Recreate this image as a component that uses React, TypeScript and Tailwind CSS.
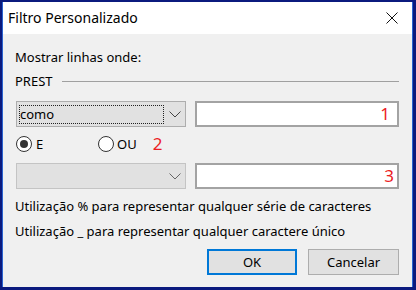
import React from 'react';

const font = { fontFamily: '"Noto Sans", "Liberation Sans", sans-serif' };

function Chevron({ color }: { color: string }) {
  return (
    <svg width="12" height="7" viewBox="0 0 12 7" className="ml-auto mr-[4px]">
      <polyline points="0.5,0.5 6,6 11.5,0.5" fill="none" stroke={color} strokeWidth="1" />
    </svg>
  );
}

function Radio({ checked }: { checked?: boolean }) {
  return (
    <span className="flex h-[16px] w-[16px] items-center justify-center rounded-full border border-[#333] bg-white">
      {checked && <span className="h-[8px] w-[8px] rounded-full bg-[#333]" />}
    </span>
  );
}

export default function App() {
  return (
    <div
      className="flex h-[290px] w-[416px] bg-[#0b1a7e] pb-[3px] pl-[2px] pr-[3px] pt-[2px] text-[13px] leading-[20px] text-black"
      style={font}
    >
      <div className="flex flex-1 flex-col border-x border-[#2a63cf]">
        {/* title bar */}
        <div className="flex h-[32px] items-center bg-white pl-[5px] pr-[14px]">
          <span className="text-[14px]">Filtro Personalizado</span>
          <svg width="12" height="12" viewBox="0 0 12 12" className="ml-auto">
            <path d="M0.5 0.5 L11.5 11.5 M11.5 0.5 L0.5 11.5" stroke="#111" strokeWidth="1" />
          </svg>
        </div>

        {/* body */}
        <div className="flex flex-1 flex-col bg-[#f0f0f0] px-3 pt-[13px]">
          <div>Mostrar linhas onde:</div>

          <div className="mt-[4px] flex items-center gap-[9px]">
            <span>PREST</span>
            <div className="mr-px flex-1 border-t border-[#a0a0a0] border-b-white" />
          </div>

          {/* row 1 */}
          <div className="mt-[10px] flex gap-[9px]">
            <div className="ml-px flex h-[26px] w-[170px] items-center border border-[#adadad] bg-[#e1e1e1]">
              <div className="ml-[2px] flex h-[19px] w-[145px] items-center border border-dotted border-[#222]">
                <span className="text-[13px] leading-none">como</span>
              </div>
              <Chevron color="#444" />
            </div>
            <div className="mr-px flex h-[26px] flex-1 items-center justify-end border-2 border-[#a3a3a3] bg-white pr-[7px]">
              <span className="text-[17px] text-[#ec1c24]">1</span>
            </div>
          </div>

          {/* radios */}
          <div className="mt-[7px] flex h-[20px] items-center">
            <div className="ml-px flex w-[82px] items-center gap-[4px]">
              <Radio checked />
              <span>E</span>
            </div>
            <div className="flex items-center gap-[3px]">
              <Radio />
              <span>OU</span>
            </div>
            <span className="ml-[16px] text-[17px] text-[#ec1c24]">2</span>
          </div>

          {/* row 2 */}
          <div className="mt-[9px] flex gap-[9px]">
            <div className="ml-px flex h-[26px] w-[170px] items-center border border-[#c4c4c4] bg-[#e1e1e1]">
              <Chevron color="#666" />
            </div>
            <div className="mr-px flex h-[26px] flex-1 items-center justify-end border-2 border-[#a3a3a3] bg-white pr-[3px]">
              <span className="text-[17px] text-[#ec1c24]">3</span>
            </div>
          </div>

          <div className="mt-[7px]">Utilização % para representar qualquer série de caracteres</div>
          <div className="mt-[5px]">Utilização _ para representar qualquer caractere único</div>

          {/* buttons */}
          <div className="mr-px mt-[8px] flex justify-end gap-[11px]">
            <button className="h-[26px] w-[90px] border-2 border-[#0078d7] bg-[#e1e1e1]">OK</button>
            <button className="h-[26px] w-[91px] border border-[#adadad] bg-[#e1e1e1]">Cancelar</button>
          </div>
        </div>
      </div>
    </div>
  );
}
